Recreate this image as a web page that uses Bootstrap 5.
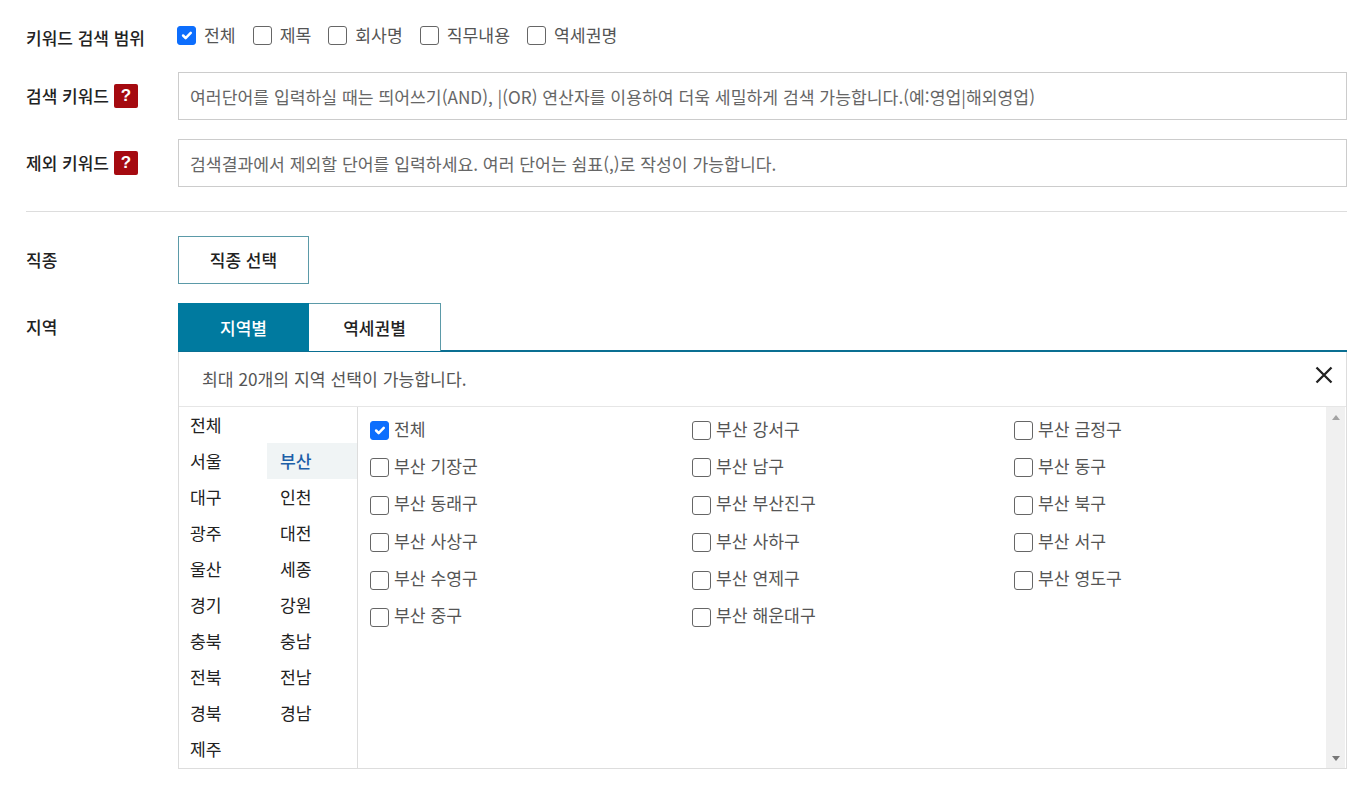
<!DOCTYPE html>
<html lang="ko">
<head>
<meta charset="utf-8">
<title>검색</title>
<link href="https://cdn.jsdelivr.net/npm/bootstrap@5.3.0/dist/css/bootstrap.min.css" rel="stylesheet">
<style>
html,body{height:100%;overflow:hidden}
body{font-family:"Noto Sans CJK KR","Noto Sans",sans-serif;color:#222;background:#fff;font-size:17.2px;line-height:24px}
.pagewrap{padding:24px 24px 0 26px}
.frow{display:flex}
.flabel{width:152px;flex:none;font-weight:500;color:#222;font-size:17px;white-space:nowrap}
.fbody{flex:1;min-width:0}
.helpbox{display:inline-flex;width:24px;height:24px;background:#a50a10;color:#fff;font-weight:700;border-radius:2px;align-items:center;justify-content:center;font-family:"Liberation Sans",sans-serif;font-size:17px;margin-left:5px;vertical-align:top}
.kwcheck{display:flex;align-items:center;gap:8px;color:#555;margin-right:18px;margin-bottom:0;line-height:22px}
.cbx.form-check-input{width:19px;height:19px;margin:0;flex:none;border:1px solid #666;border-radius:3px}
.cbx.form-check-input:checked{background-color:#0d6efd;border-color:#0d6efd}
.kwcheck .cbx{margin-left:-1px}
.kwinput.form-control{height:48px;border:1px solid #ccc;border-radius:0;padding:0 11px;font-size:17.2px;color:#555}
.kwinput.form-control::placeholder{color:#666;opacity:1}
.divider{border-top:1px solid #ddd;margin:24px 0 24px}
.pickbtn.btn{width:131px;height:48px;border:1px solid #5b9aa8;border-radius:0;background:#fff;color:#222;font-weight:500;font-size:17px;padding:0}
.tabstrip{display:flex;height:49px;border-bottom:2px solid #0a6f92}
.tabitem{width:131px;height:48px;display:flex;align-items:center;justify-content:center;font-weight:500;font-size:17px;border:1px solid #5b9aa8;border-bottom:0;background:#fff;color:#222;text-decoration:none}
.tabitem + .tabitem{width:132px;border-left:0}
.tabitem.on{background:#007a9f;color:#fff;border-color:#007a9f}
.regionpanel{border:1px solid #ddd;border-top:0;height:417px;display:flex;flex-direction:column}
.panelhead{height:55px;flex:none;display:flex;align-items:center;justify-content:space-between;padding:0 12px 0 23px;border-bottom:1px solid #e6e6e6;color:#555}
.closebtn{background:none;border:0;padding:0;line-height:0;margin-bottom:8px}
.panelbody{flex:1;display:flex;min-height:0}
.sidelist{width:179px;flex:none;border-right:1px solid #ddd;display:grid;grid-template-columns:88px 90px;grid-auto-rows:36px}
.sideitem{display:flex;align-items:center;padding-left:11px;color:#222;text-decoration:none}
.sideitem.on{background:#f0f4f5;color:#1d5fa8;font-weight:500}
.sideitem.alt{padding-left:13px}
.sidegap{display:block}
.towns{flex:1;display:grid;grid-template-columns:322px 322px 1fr;grid-auto-rows:37.4px;padding:3px 0 0 12px;align-content:start}
.towncheck{display:flex;align-items:center;gap:5px;color:#555;margin:0;height:37px}
.towncheck .cbx{position:relative;top:2px}
.fakebar{width:19px;flex:none;background:#f0f0f0;margin-right:1px;display:flex;flex-direction:column;justify-content:space-between;align-items:center;padding:8px 0 7px}
.arrup{width:0;height:0;border-left:4px solid transparent;border-right:4px solid transparent;border-bottom:5px solid #a3a3a3}
.arrdn{width:0;height:0;border-left:4px solid transparent;border-right:4px solid transparent;border-top:5px solid #777}
</style>
</head>
<body>
<div class="pagewrap">
  <div class="frow" style="height:48px">
    <div class="flabel" style="padding-top:2px">키워드 검색 범위</div>
    <div class="fbody d-flex align-items-start">
      <label class="kwcheck"><input class="form-check-input cbx" type="checkbox" checked>전체</label>
      <label class="kwcheck"><input class="form-check-input cbx" type="checkbox">제목</label>
      <label class="kwcheck"><input class="form-check-input cbx" type="checkbox">회사명</label>
      <label class="kwcheck"><input class="form-check-input cbx" type="checkbox">직무내용</label>
      <label class="kwcheck"><input class="form-check-input cbx" type="checkbox">역세권명</label>
    </div>
  </div>
  <div class="frow align-items-center" style="margin-bottom:19px">
    <div class="flabel">검색 키워드<span class="helpbox">?</span></div>
    <div class="fbody"><input class="form-control kwinput" placeholder="여러단어를 입력하실 때는 띄어쓰기(AND), |(OR) 연산자를 이용하여 더욱 세밀하게 검색 가능합니다.(예:영업|해외영업)"></div>
  </div>
  <div class="frow align-items-center">
    <div class="flabel">제외 키워드<span class="helpbox">?</span></div>
    <div class="fbody"><input class="form-control kwinput" placeholder="검색결과에서 제외할 단어를 입력하세요. 여러 단어는 쉼표(,)로 작성이 가능합니다."></div>
  </div>
  <div class="divider"></div>
  <div class="frow align-items-center" style="margin-bottom:19px">
    <div class="flabel">직종</div>
    <div class="fbody"><button type="button" class="btn pickbtn">직종 선택</button></div>
  </div>
  <div class="frow">
    <div class="flabel" style="padding-top:12px">지역</div>
    <div class="fbody">
      <div class="tabstrip">
        <a class="tabitem on" href="#">지역별</a>
        <a class="tabitem" href="#">역세권별</a>
      </div>
      <div class="regionpanel">
        <div class="panelhead">
          <span>최대 20개의 지역 선택이 가능합니다.</span>
          <button type="button" class="closebtn" aria-label="닫기"><svg width="20" height="20" viewBox="0 0 20 20"><path d="M2.5 2.5 L17.5 17.5 M17.5 2.5 L2.5 17.5" stroke="#222" stroke-width="2.3" fill="none"/></svg></button>
        </div>
        <div class="panelbody">
          <div class="sidelist">
            <a class="sideitem" href="#">전체</a><span class="sidegap"></span>
            <a class="sideitem" href="#">서울</a><a class="sideitem alt on" href="#">부산</a>
            <a class="sideitem" href="#">대구</a><a class="sideitem alt" href="#">인천</a>
            <a class="sideitem" href="#">광주</a><a class="sideitem alt" href="#">대전</a>
            <a class="sideitem" href="#">울산</a><a class="sideitem alt" href="#">세종</a>
            <a class="sideitem" href="#">경기</a><a class="sideitem alt" href="#">강원</a>
            <a class="sideitem" href="#">충북</a><a class="sideitem alt" href="#">충남</a>
            <a class="sideitem" href="#">전북</a><a class="sideitem alt" href="#">전남</a>
            <a class="sideitem" href="#">경북</a><a class="sideitem alt" href="#">경남</a>
            <a class="sideitem" href="#">제주</a>
          </div>
          <div class="towns">
            <label class="towncheck"><input class="form-check-input cbx" type="checkbox" checked>전체</label>
            <label class="towncheck"><input class="form-check-input cbx" type="checkbox">부산 강서구</label>
            <label class="towncheck"><input class="form-check-input cbx" type="checkbox">부산 금정구</label>
            <label class="towncheck"><input class="form-check-input cbx" type="checkbox">부산 기장군</label>
            <label class="towncheck"><input class="form-check-input cbx" type="checkbox">부산 남구</label>
            <label class="towncheck"><input class="form-check-input cbx" type="checkbox">부산 동구</label>
            <label class="towncheck"><input class="form-check-input cbx" type="checkbox">부산 동래구</label>
            <label class="towncheck"><input class="form-check-input cbx" type="checkbox">부산 부산진구</label>
            <label class="towncheck"><input class="form-check-input cbx" type="checkbox">부산 북구</label>
            <label class="towncheck"><input class="form-check-input cbx" type="checkbox">부산 사상구</label>
            <label class="towncheck"><input class="form-check-input cbx" type="checkbox">부산 사하구</label>
            <label class="towncheck"><input class="form-check-input cbx" type="checkbox">부산 서구</label>
            <label class="towncheck"><input class="form-check-input cbx" type="checkbox">부산 수영구</label>
            <label class="towncheck"><input class="form-check-input cbx" type="checkbox">부산 연제구</label>
            <label class="towncheck"><input class="form-check-input cbx" type="checkbox">부산 영도구</label>
            <label class="towncheck"><input class="form-check-input cbx" type="checkbox">부산 중구</label>
            <label class="towncheck"><input class="form-check-input cbx" type="checkbox">부산 해운대구</label>
          </div>
          <div class="fakebar"><span class="arrup"></span><span class="arrdn"></span></div>
        </div>
      </div>
    </div>
  </div>
</div>
<script src="https://cdn.jsdelivr.net/npm/bootstrap@5.3.0/dist/js/bootstrap.bundle.min.js"></script>
</body>
</html>
